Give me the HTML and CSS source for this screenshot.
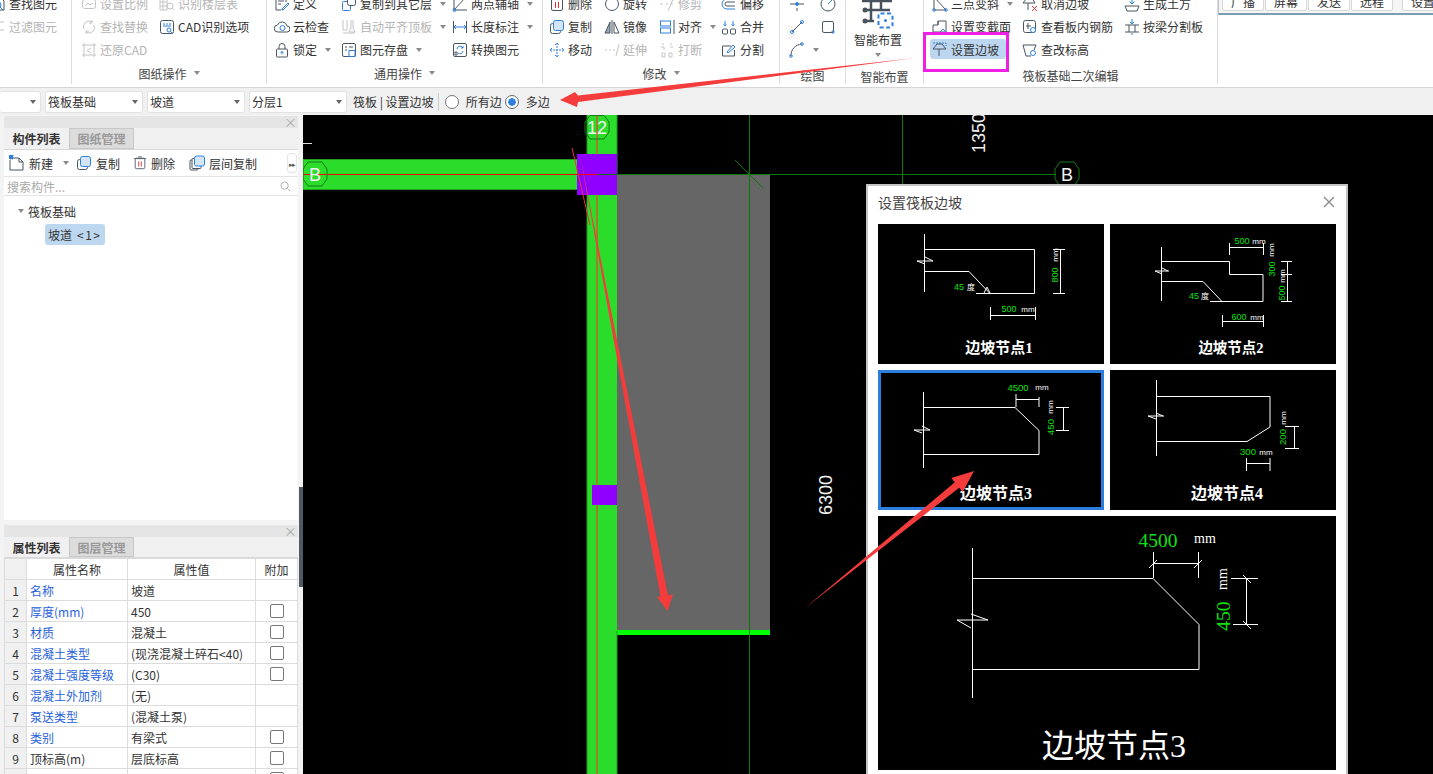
FILE: index.html
```html
<!DOCTYPE html>
<html lang="zh-CN">
<head>
    <meta charset="UTF-8">
    <title>设置筏板边坡</title>
    <link rel="stylesheet" href="styles.css">
</head>
<body>
    <!-- 图标 -->
    <svg class="sprite" xmlns="http://www.w3.org/2000/svg">
        <symbol id="i-find" viewBox="0 0 16 16"><path d="M2 2h9l3 3v9H2z"/><circle class="a" cx="8" cy="9" r="3"/><path class="a" d="M10 11l3 3"/></symbol>
        <symbol id="i-filter" viewBox="0 0 16 16"><path d="M2 3h12M2 7h8M2 11h12M2 14h6"/></symbol>
        <symbol id="i-scale" viewBox="0 0 16 16"><rect x="1.5" y="3.5" width="13" height="9" rx="2"/><path d="M4 10l3-3 2 2 3-2"/></symbol>
        <symbol id="i-replace" viewBox="0 0 16 16"><path d="M3 10a5.500 5.500 0 0 1 8-7M13 6a5.500 5.500 0 0 1-8 7"/><path d="M11 1v3H8M5 15v-3h3"/></symbol>
        <symbol id="i-restore" viewBox="0 0 16 16"><path d="M3 1v14M13 1v14M1 3h14M1 13h14"/><path d="M10 6L6 8.500l4 2.500"/></symbol>
        <symbol id="i-floor" viewBox="0 0 16 16"><path d="M1 2h7v12H1zM1 6h7M1 10h7M4 2v12"/><circle cx="11" cy="10" r="3"/><path d="M13 12l2 2"/></symbol>
        <symbol id="i-cadopt" viewBox="0 0 16 16"><rect x="1.500" y="1.500" width="13" height="13" rx="2"/><path class="a" d="M4 5h2M7 5h2M10 5h2M4 7h8"/><circle class="a" cx="10" cy="11" r="2"/><path class="a" d="M11.500 12.500L14 15"/></symbol>
        <symbol id="i-define" viewBox="0 0 16 16"><path d="M12 6V2H2v12h5"/><path d="M4 5h6M4 8h3"/><path class="a" d="M8 13l6-6 1 1-6 6H8z"/></symbol>
        <symbol id="i-cloud" viewBox="0 0 16 16"><path d="M4 13a3.500 3.500 0 0 1-.500-7A5 5 0 0 1 13 7a3 3 0 0 1 0 6z"/><circle class="a" cx="8.500" cy="9" r="2.500"/></symbol>
        <symbol id="i-lock" viewBox="0 0 16 16"><path d="M5 7V4.500a3 3 0 0 1 6 0V7"/><rect x="2.500" y="7" width="11" height="8" rx="1"/><path class="a" d="M8 9.500v3M6.500 11L8 9.500 9.500 11"/></symbol>
        <symbol id="i-copyto" viewBox="0 0 16 16"><rect class="a" x="1.500" y="5.500" width="8" height="9" rx="1"/><rect x="6.500" y="1.500" width="8" height="8" rx="2" fill="#fff"/></symbol>
        <symbol id="i-aligntop" viewBox="0 0 16 16"><path d="M2 1v10h4V1M2 14h12"/><path d="M10 1v8l-2 4h6l-2-4V1"/></symbol>
        <symbol id="i-save" viewBox="0 0 16 16"><rect x="1.500" y="1.500" width="13" height="13" rx="1.500"/><path d="M4 5h2M8 5h4M4 8h2"/><rect class="a" x="8" y="8.500" width="6" height="6"/></symbol>
        <symbol id="i-axis" viewBox="0 0 16 16"><path d="M2 14L13 2M2 14h13M2 2v12"/><circle class="a" cx="2.500" cy="14" r="1.500"/></symbol>
        <symbol id="i-dim" viewBox="0 0 16 16"><path d="M1.500 2v12M14.500 2v12"/><path class="a" d="M2 8h12M4 6L2 8l2 2M12 6l2 2-2 2"/></symbol>
        <symbol id="i-convert" viewBox="0 0 16 16"><rect x="1.500" y="1.500" width="13" height="13" rx="1.500"/><path class="a" d="M5 7a3 3 0 0 1 5-2l1 1M11 4v2H9M11 9a3 3 0 0 1-5 2"/><path d="M3 10h2v3H3z"/></symbol>
        <symbol id="i-del" viewBox="0 0 16 16"><rect x="2.500" y="2.500" width="11" height="12" rx="1.500"/><path d="M6 1h4M1 3h14"/><path class="r" d="M6.500 6v6M9.500 6v6"/></symbol>
        <symbol id="i-copy" viewBox="0 0 16 16"><rect x="1.500" y="4.500" width="10" height="10" rx="2"/><rect class="a" x="4.500" y="1.500" width="10" height="10" rx="2" fill="#d4e5f8"/></symbol>
        <symbol id="i-move" viewBox="0 0 16 16"><path class="a" d="M8 1v14M1 8h14M6 3l2-2 2 2M6 13l2 2 2-2M3 6L1 8l2 2M13 6l2 2-2 2" stroke-dasharray="2 1"/></symbol>
        <symbol id="i-rotate" viewBox="0 0 16 16"><circle cx="8" cy="8" r="6.500"/></symbol>
        <symbol id="i-mirror" viewBox="0 0 16 16"><path d="M8 1v14"/><path class="g" d="M6 3L1 14h5z"/><path d="M10 3l5 11h-5z"/></symbol>
        <symbol id="i-extend" viewBox="0 0 16 16"><path d="M1 8h2M5 8h2M9 8h2M15 2l-3 12"/></symbol>
        <symbol id="i-trim" viewBox="0 0 16 16"><path d="M1 8h3M7 8h2M15 1L9 15"/><path d="M12 8h3" stroke-dasharray="2 1"/></symbol>
        <symbol id="i-align" viewBox="0 0 16 16"><rect class="a" x="1.500" y="2" width="10" height="5"/><rect class="a" x="1.500" y="9" width="10" height="5"/><path d="M15 1v14"/></symbol>
        <symbol id="i-break" viewBox="0 0 16 16"><path d="M2 5h3v3M11 5h3M3 11h3v4H3zM10 11h3v4h-3z"/><path d="M4 1v2M12 1v2"/></symbol>
        <symbol id="i-offset" viewBox="0 0 16 16"><path class="a" d="M14 3H6a5 5 0 0 0 0 10h8"/><path d="M14 6H6a2 2 0 0 0 0 4h8"/></symbol>
        <symbol id="i-merge" viewBox="0 0 16 16"><rect x="1.500" y="10" width="5" height="5" rx="1"/><rect x="9.500" y="10" width="5" height="5" rx="1"/><path class="a" d="M4 2v5M2.500 5.500L4 7l1.500-1.500M12 2v5M10.500 5.500L12 7l1.500-1.500"/></symbol>
        <symbol id="i-split" viewBox="0 0 16 16"><path d="M10 4H1.500v10h12V8"/><path class="a" d="M6 10l6-7 2 2-7 6z"/></symbol>
        <symbol id="i-point" viewBox="0 0 16 16"><path d="M1 8h5M10 8h5M8 1v3M8 12v3"/><circle class="a" cx="8" cy="8" r="1.500" fill="#2f80dc"/></symbol>
        <symbol id="i-circle" viewBox="0 0 16 16"><circle cx="8" cy="8" r="7"/><path class="a" d="M8 8l4-4"/></symbol>
        <symbol id="i-line" viewBox="0 0 16 16"><path d="M3 13L13 3"/><circle class="a" cx="3" cy="13" r="1.500"/><circle class="a" cx="13" cy="3" r="1.500"/></symbol>
        <symbol id="i-rect" viewBox="0 0 16 16"><rect x="2.500" y="2.500" width="11" height="11" rx="1.500"/><circle class="a" cx="13" cy="13" r="1.200"/></symbol>
        <symbol id="i-arc" viewBox="0 0 16 16"><path d="M2 14C2 7 6 3 13 2"/><circle class="a" cx="2" cy="14" r="1.300"/><circle class="a" cx="13" cy="2" r="1.300"/></symbol>
        <symbol id="i-tri" viewBox="0 0 16 16"><path d="M2 1v13h12z"/><circle class="a" cx="2" cy="14" r="1.300"/><circle class="a" cx="14" cy="14" r="1.300"/></symbol>
        <symbol id="i-section" viewBox="0 0 16 16"><path d="M1 6h5V2h8v11H1z"/><path d="M6 2v4"/><path class="a" d="M8 13l3-3 3 3"/></symbol>
        <symbol id="i-slope" viewBox="0 0 16 16"><path class="a" d="M1 2h13v3" stroke-dasharray="2 1"/><path d="M1 8l4-5h5l4 5zM7 8v7"/></symbol>
        <symbol id="i-cancel" viewBox="0 0 16 16"><path d="M1 7l4-5h5l3 5zM6 7v7"/><path class="r" d="M10 10l5 5M15 10l-5 5"/></symbol>
        <symbol id="i-rebar" viewBox="0 0 16 16"><rect x="1.500" y="1.500" width="12" height="12" rx="2"/><path d="M6 4v6M4 7h5"/><circle class="a" cx="11" cy="11" r="2.500" fill="#fff"/></symbol>
        <symbol id="i-elev" viewBox="0 0 16 16"><path d="M1 3h13L12 8M1 3l3 11h5"/><circle class="a" cx="11" cy="11" r="2.500"/></symbol>
        <symbol id="i-earth" viewBox="0 0 16 16"><path d="M1 10h14l-2 5H3z"/><path class="a" d="M8 1v7M5.500 5.500L8 8l2.500-2.500"/></symbol>
        <symbol id="i-beam" viewBox="0 0 16 16"><path d="M1 6h4v7H1M15 6h-4v7h4M5 6h6M5 13h6"/><path class="a" d="M8 0v5M6 3l2 2 2-2M8 14v2"/></symbol>
        <symbol id="i-new" viewBox="0 0 16 16"><path d="M3 3h7l4 4v8H1V5"/><path d="M10 3v4h4"/><rect class="a" x="0" y="0" width="4" height="4" fill="#2f80dc" stroke-dasharray="1 1"/></symbol>
        <symbol id="i-layer" viewBox="0 0 16 16"><rect x="1" y="5" width="8" height="10" rx="1"/><rect x="3" y="3.500" width="9" height="10" rx="1" fill="#fff"/><rect class="a" x="5.500" y="1" width="10" height="10" rx="2" fill="#d4e5f8"/></symbol>
    </svg>

    <div class="app">
        <header class="ribbon">
            <section class="rb-group g-find">
                <div class="rb-cols">
                    <div class="rb-item"><svg class="ico"><use href="#i-find"/></svg>查找图元</div>
                    <div class="rb-item off"><svg class="ico"><use href="#i-filter"/></svg>过滤图元</div>
                </div>
            </section>
            <section class="rb-group g-draw">
                <div class="rb-cols">
                    <div class="rb-item off"><svg class="ico"><use href="#i-scale"/></svg>设置比例</div>
                    <div class="rb-item off"><svg class="ico"><use href="#i-replace"/></svg>查找替换</div>
                    <div class="rb-item off"><svg class="ico"><use href="#i-restore"/></svg>还原CAD</div>
                    <div class="rb-item off"><svg class="ico"><use href="#i-floor"/></svg>识别楼层表</div>
                    <div class="rb-item"><svg class="ico"><use href="#i-cadopt"/></svg>CAD识别选项</div>
                </div>
                <div class="rb-label">图纸操作<i class="caret"></i></div>
            </section>
            <section class="rb-group g-common">
                <div class="rb-cols">
                    <div class="rb-item"><svg class="ico"><use href="#i-define"/></svg>定义</div>
                    <div class="rb-item"><svg class="ico"><use href="#i-cloud"/></svg>云检查</div>
                    <div class="rb-item"><svg class="ico"><use href="#i-lock"/></svg>锁定<i class="caret"></i></div>
                    <div class="rb-item"><svg class="ico"><use href="#i-copyto"/></svg>复制到其它层<i class="caret"></i></div>
                    <div class="rb-item off"><svg class="ico"><use href="#i-aligntop"/></svg>自动平齐顶板<i class="caret"></i></div>
                    <div class="rb-item"><svg class="ico"><use href="#i-save"/></svg>图元存盘<i class="caret"></i></div>
                    <div class="rb-item"><svg class="ico"><use href="#i-axis"/></svg>两点辅轴<i class="caret"></i></div>
                    <div class="rb-item"><svg class="ico"><use href="#i-dim"/></svg>长度标注<i class="caret"></i></div>
                    <div class="rb-item"><svg class="ico"><use href="#i-convert"/></svg>转换图元</div>
                </div>
                <div class="rb-label">通用操作<i class="caret"></i></div>
            </section>
            <section class="rb-group g-modify">
                <div class="rb-cols">
                    <div class="rb-item"><svg class="ico"><use href="#i-del"/></svg>删除</div>
                    <div class="rb-item"><svg class="ico"><use href="#i-copy"/></svg>复制</div>
                    <div class="rb-item"><svg class="ico"><use href="#i-move"/></svg>移动</div>
                    <div class="rb-item"><svg class="ico"><use href="#i-rotate"/></svg>旋转</div>
                    <div class="rb-item"><svg class="ico"><use href="#i-mirror"/></svg>镜像</div>
                    <div class="rb-item off"><svg class="ico"><use href="#i-extend"/></svg>延伸</div>
                    <div class="rb-item off"><svg class="ico"><use href="#i-trim"/></svg>修剪</div>
                    <div class="rb-item"><svg class="ico"><use href="#i-align"/></svg>对齐<i class="caret"></i></div>
                    <div class="rb-item off"><svg class="ico"><use href="#i-break"/></svg>打断</div>
                    <div class="rb-item"><svg class="ico"><use href="#i-offset"/></svg>偏移</div>
                    <div class="rb-item"><svg class="ico"><use href="#i-merge"/></svg>合并</div>
                    <div class="rb-item"><svg class="ico"><use href="#i-split"/></svg>分割</div>
                </div>
                <div class="rb-label">修改<i class="caret"></i></div>
            </section>
            <section class="rb-group g-sketch">
                <div class="rb-cols">
                    <div class="rb-item"><svg class="ico"><use href="#i-point"/></svg></div>
                    <div class="rb-item"><svg class="ico"><use href="#i-line"/></svg></div>
                    <div class="rb-item"><svg class="ico"><use href="#i-arc"/></svg><i class="caret"></i></div>
                    <div class="rb-item"><svg class="ico"><use href="#i-circle"/></svg></div>
                    <div class="rb-item"><svg class="ico"><use href="#i-rect"/></svg></div>
                </div>
                <div class="rb-label low">绘图</div>
            </section>
            <section class="rb-group g-smart">
                <div class="smart-btn">
                    <svg class="smart-ico" viewBox="0 0 32 36">
                        <path d="M9 0v26M19 0v16M0 6h30M4 15h24M4 26h8" stroke="#47525e" stroke-width="2.500" fill="none"/>
                        <circle cx="3" cy="15" r="2.500" fill="#47525e"/>
                        <circle cx="3" cy="26" r="2.500" fill="#47525e"/>
                        <rect x="16.500" y="18.500" width="14" height="14" rx="2" fill="#fff" stroke="#2f80dc" stroke-width="2" stroke-dasharray="4 2.500"/>
                        <circle cx="23.500" cy="25.500" r="1.500" fill="#2f80dc"/>
                    </svg>
                    <span>智能布置</span>
                    <i class="caret"></i>
                </div>
                <div class="rb-label low">智能布置</div>
            </section>
            <section class="rb-group g-edit">
                <div class="rb-cols">
                    <div class="rb-item"><svg class="ico"><use href="#i-tri"/></svg>三点变斜<i class="caret"></i></div>
                    <div class="rb-item"><svg class="ico"><use href="#i-section"/></svg>设置变截面</div>
                    <div class="rb-item active"><svg class="ico"><use href="#i-slope"/></svg>设置边坡</div>
                    <div class="rb-item"><svg class="ico"><use href="#i-cancel"/></svg>取消边坡</div>
                    <div class="rb-item"><svg class="ico"><use href="#i-rebar"/></svg>查看板内钢筋</div>
                    <div class="rb-item"><svg class="ico"><use href="#i-elev"/></svg>查改标高</div>
                    <div class="rb-item"><svg class="ico"><use href="#i-earth"/></svg>生成土方</div>
                    <div class="rb-item"><svg class="ico"><use href="#i-beam"/></svg>按梁分割板</div>
                </div>
                <div class="rb-label low">筏板基础二次编辑</div>
                <div class="pink-box"></div>
            </section>
            <section class="live-bar">
                <div class="live-btns">
                    <span class="live-btn">广播</span>
                    <span class="live-btn">屏幕</span>
                    <span class="live-btn">发送</span>
                    <span class="live-btn">远程</span>
                    <span class="live-btn last">设置</span>
                </div>
            </section>
        </header>

        <div class="optbar">
            <div class="sel s-first"><i class="caret dark"></i></div>
            <div class="sel">筏板基础<i class="caret dark"></i></div>
            <div class="sel">坡道<i class="caret dark"></i></div>
            <div class="sel">分层1<i class="caret dark"></i></div>
            <span class="opt-title">筏板 | 设置边坡</span>
            <span class="opt-sep"></span>
            <span class="radio"></span><span class="radio-text">所有边</span>
            <span class="radio on"></span><span class="radio-text">多边</span>
        </div>

        <main class="workspace">
            <aside class="side">
                <div class="panel panel-top">
                    <div class="panel-bar">×</div>
                    <div class="tabs">
                        <span class="tab cur">构件列表</span>
                        <span class="tab">图纸管理</span>
                    </div>
                    <div class="tools">
                        <span class="tool t-new"><svg class="ico"><use href="#i-new"/></svg>新建<i class="caret"></i></span>
                        <span class="tool t-copy"><svg class="ico"><use href="#i-copy"/></svg>复制</span>
                        <span class="tool t-del"><svg class="ico"><use href="#i-del"/></svg>删除</span>
                        <span class="tool"><svg class="ico"><use href="#i-layer"/></svg>层间复制</span>
                        <span class="tool-more">▸▸</span>
                    </div>
                    <div class="search">
                        <span>搜索构件...</span>
                        <svg class="search-ico" viewBox="0 0 12 12"><circle cx="5" cy="5" r="4"/><path d="M8 8l3 3"/></svg>
                    </div>
                    <div class="tree">
                        <div class="tree-root"><i class="caret"></i>筏板基础</div>
                        <div class="tree-leaf">坡道<span class="leaf-count">&lt;1&gt;</span></div>
                    </div>
                </div>
                <div class="panel panel-bottom">
                    <div class="panel-bar">×</div>
                    <div class="tabs">
                        <span class="tab cur">属性列表</span>
                        <span class="tab">图层管理</span>
                    </div>
                    <table class="props">
                        <thead>
                            <tr><th class="no"></th><th class="pname">属性名称</th><th class="pval">属性值</th><th class="padd">附加</th></tr>
                        </thead>
                        <tbody>
                            <tr><td class="no">1</td><td class="link">名称</td><td>坡道</td><td></td></tr>
                            <tr><td class="no">2</td><td class="link">厚度(mm)</td><td>450</td><td><i class="check"></i></td></tr>
                            <tr><td class="no">3</td><td class="link">材质</td><td>混凝土</td><td><i class="check"></i></td></tr>
                            <tr><td class="no">4</td><td class="link">混凝土类型</td><td>(现浇混凝土碎石&lt;40)</td><td><i class="check"></i></td></tr>
                            <tr><td class="no">5</td><td class="link">混凝土强度等级</td><td>(C30)</td><td><i class="check"></i></td></tr>
                            <tr><td class="no">6</td><td class="link">混凝土外加剂</td><td>(无)</td><td></td></tr>
                            <tr><td class="no">7</td><td class="link">泵送类型</td><td>(混凝土泵)</td><td></td></tr>
                            <tr><td class="no">8</td><td class="link">类别</td><td>有梁式</td><td><i class="check"></i></td></tr>
                            <tr><td class="no">9</td><td>顶标高(m)</td><td>层底标高</td><td><i class="check"></i></td></tr>
                            <tr><td class="no"></td><td></td><td></td><td><i class="check"></i></td></tr>
                        </tbody>
                    </table>
                </div>
                <div class="side-handle"></div>
            </aside>

            <section class="canvas">
                <svg class="cad" viewBox="303 115 1130 659">
                    <rect x="617" y="175" width="153" height="456" fill="#666"/>
                    <rect x="617" y="630" width="153" height="5" fill="#00ff00"/>
                    <rect x="303" y="159.500" width="275" height="30" fill="#2bdc2b" stroke="#229c22"/>
                    <rect x="587" y="115" width="30" height="659" fill="#2bdc2b"/>
                    <path d="M587 115v659M617 115v60M617 631v143" stroke="#229c22" fill="none"/>
                    <path d="M597 115V774" stroke="#c8602a" stroke-width="1.500" fill="none"/>
                    <rect x="577" y="154" width="40" height="41" fill="#8f00ff"/>
                    <rect x="592" y="485" width="25" height="20" fill="#8f00ff"/>
                    <path d="M597 174.500H1056M749.500 115V774M902.500 115V184M735 160l28 28" stroke="#0b7a0b" fill="none"/>
                    <path d="M303 143.500h9" stroke="#ddd" fill="none"/>
                    <path d="M303 174.500H597" stroke="#f00" fill="none"/>
                    <path d="M572 148l18 77" stroke="#e33" fill="none"/>
                    <polygon points="590,115.500 604,115.500 609,122 609,132 604,139 590,139 585,132 585,122" fill="none" stroke="#157a15"/>
                    <polygon points="308,162 322,162 327,169 327,179 322,186 308,186 303,179 303,169" fill="none" stroke="#157a15"/>
                    <polygon points="1060,162 1074,162 1079,169 1079,179 1074,186 1060,186 1055,179 1055,169" fill="none" stroke="#157a15"/>
                    <text class="cad-t" x="597" y="134" text-anchor="middle" font-size="18">12</text>
                    <text class="cad-t" x="315" y="181" text-anchor="middle" font-size="18">B</text>
                    <text class="cad-t" x="1067" y="181" text-anchor="middle" font-size="18">B</text>
                    <text class="cad-t" text-anchor="middle" font-size="18" transform="translate(985 133) rotate(-90)">1350</text>
                    <text class="cad-t" text-anchor="middle" font-size="18" transform="translate(832 495) rotate(-90)">6300</text>
                </svg>

                <div class="dialog">
                    <div class="dlg-head">
                        <span>设置筏板边坡</span>
                        <svg class="dlg-close" viewBox="0 0 12 12"><path d="M1 1l10 10M11 1L1 11"/></svg>
                    </div>
                    <div class="nodes">
                        <div class="node">
                            <svg viewBox="0 0 226 140">
                                <path class="ln" d="M46.500 10v58M46.500 25.500h110v44H98M46.500 47.500H91l21 22M39 37h16M47 33l8 4M39 37l8 3"/>
                                <path class="ln" d="M182.500 25v44M175 25.500h12M175 69.500h12M112.500 83v13M157.500 83v13M112 91.500h45M106 69l3-6 3 6"/>
                                <text class="gr" x="131" y="88" text-anchor="middle" font-size="9">500</text>
                                <text class="wh" x="150" y="88" text-anchor="middle" font-size="8">mm</text>
                                <text class="gr" text-anchor="middle" font-size="9" transform="translate(180 51) rotate(-90)">800</text>
                                <text class="wh" text-anchor="middle" font-size="8" transform="translate(180 31) rotate(-90)">mm</text>
                                <text class="gr" x="81" y="66" text-anchor="middle" font-size="9">45</text>
                                <text class="wh" x="93" y="66" text-anchor="middle" font-size="8">度</text>
                                <text class="node-title" x="121" y="129" text-anchor="middle" font-size="15">边坡节点1</text>
                            </svg>
                        </div>
                        <div class="node">
                            <svg viewBox="0 0 226 140">
                                <path class="ln" d="M51.500 23v54M51.500 37.500H119.500V50.500H153V77.500H100M51.500 57.500H93l19 20M45 47h14M52 44l6 3M45 47l7 3"/>
                                <path class="ln" d="M119.500 19v12M153.500 19v12M119 23.500h34M177.500 37v40M171 37.500h11M171 50.500h11M171 77.500h11M112.500 91v12M153.500 91v12M112 97.500h41"/>
                                <text class="gr" x="132" y="20" text-anchor="middle" font-size="9">500</text>
                                <text class="wh" x="149" y="20" text-anchor="middle" font-size="8">mm</text>
                                <text class="wh" text-anchor="middle" font-size="8" transform="translate(164 26) rotate(-90)">mm</text>
                                <text class="gr" text-anchor="middle" font-size="9" transform="translate(165 45) rotate(-90)">300</text>
                                <text class="wh" text-anchor="middle" font-size="8" transform="translate(175 52) rotate(-90)">mm</text>
                                <text class="gr" text-anchor="middle" font-size="9" transform="translate(175 69) rotate(-90)">500</text>
                                <text class="gr" x="84" y="75" text-anchor="middle" font-size="9">45</text>
                                <text class="wh" x="95" y="75" text-anchor="middle" font-size="8">度</text>
                                <text class="gr" x="129" y="96" text-anchor="middle" font-size="9">600</text>
                                <text class="wh" x="147" y="96" text-anchor="middle" font-size="8">mm</text>
                                <text class="node-title" x="121" y="129" text-anchor="middle" font-size="14.500">边坡节点2</text>
                            </svg>
                        </div>
                        <div class="node selected">
                            <svg viewBox="0 0 226 140">
                                <path class="ln" d="M45.500 22v76M45 37.500H137L161 60.500V84.500H45M36 60h16M44 56l8 4M36 60l8 3"/>
                                <path class="ln" d="M138 24v13M161 27v10M138 29.500h23M185.500 37v23M178 37.500h13M178 60.500h13"/>
                                <text class="gr" x="140" y="21" text-anchor="middle" font-size="9.500">4500</text>
                                <text class="wh" x="164" y="20" text-anchor="middle" font-size="8">mm</text>
                                <text class="wh" text-anchor="middle" font-size="8" transform="translate(175 37) rotate(-90)">mm</text>
                                <text class="gr" text-anchor="middle" font-size="9.500" transform="translate(176 57) rotate(-90)">450</text>
                                <text class="node-title" x="118" y="129" text-anchor="middle" font-size="16">边坡节点3</text>
                            </svg>
                        </div>
                        <div class="node">
                            <svg viewBox="0 0 226 140">
                                <path class="ln" d="M46.500 10v76M46 26.500H160V57L137 71.500H46M38 46h16M46 43l7 3M38 46l8 3"/>
                                <path class="ln" d="M184.500 56v23M175 56.500h14M175 78.500h14M136.500 88v13M160 88v13M136 93.500h24"/>
                                <text class="wh" text-anchor="middle" font-size="8" transform="translate(176 48) rotate(-90)">mm</text>
                                <text class="gr" text-anchor="middle" font-size="9.500" transform="translate(176 67) rotate(-90)">200</text>
                                <text class="gr" x="138" y="85" text-anchor="middle" font-size="9.500">300</text>
                                <text class="wh" x="156" y="85" text-anchor="middle" font-size="8">mm</text>
                                <text class="node-title" x="117" y="129" text-anchor="middle" font-size="16">边坡节点4</text>
                            </svg>
                        </div>
                        <div class="node preview">
                            <svg viewBox="0 0 458 254">
                                <path class="ln" d="M94.500 32v150M94 62.500H275L321 108.500V153.500H94M93 98l17 6H79l14 8"/>
                                <path class="ln" d="M275.500 36v26M320.500 36v26M275 47.500h45M271 52l8-8M316 52l8-8M368.500 62v46M353 62.500h27M355 108.500h25M365 59l8 8M365 105l8 8"/>
                                <text class="gr serif" x="280" y="31" text-anchor="middle" font-size="19.500">4500</text>
                                <text class="wh serif" x="327" y="27" text-anchor="middle" font-size="14">mm</text>
                                <text class="wh serif" text-anchor="middle" font-size="14" transform="translate(349 63) rotate(-90)">mm</text>
                                <text class="gr serif" text-anchor="middle" font-size="19.500" transform="translate(352 100) rotate(-90)">450</text>
                                <text class="node-title big" x="236" y="241" text-anchor="middle" font-size="32">边坡节点3</text>
                            </svg>
                        </div>
                    </div>
                </div>
            </section>
        </main>

        <!-- 截图上的标注 -->
        <svg class="marks" viewBox="0 0 1433 774">
            <polygon points="560,100 575,92 578,95.500 915,58 578,102 577,107"/>
            <polygon points="579,150 668,595.500 673,594 667.700,611 657,597 660.500,596.500"/>
            <polygon points="805,608 954.800,482.300 951.300,478 974,471 962.700,492 959.200,487.700"/>
        </svg>
    </div>
</body>
</html>
```
FILE: styles.css
```css
* {
    box-sizing: border-box;
}
html, body {
    margin: 0;
    height: 100%;
    overflow: hidden;
}
body {
    font-family: "Noto Sans CJK SC", "Noto Sans", sans-serif;
    font-size: 12px;
    color: #333;
    background-color: #f0f0f0;
}
.sprite {
    display: none;
}
.app {
    position: relative;
    display: flex;
    flex-direction: column;
    width: 1433px;
    height: 774px;
    overflow: hidden;
}

/* 图标 */
.ico {
    flex: none;
    width: 16px;
    height: 16px;
    fill: none;
    stroke: #4a5562;
    stroke-width: 1;
    --ac: #2f80dc;
}
.a { stroke: var(--ac); }
.r { stroke: #e03030; }
.g { fill: #9aa7b5; }
.off .ico {
    stroke: #c4c4c4;
    --ac: #c4c4c4;
}
.caret {
    display: inline-block;
    flex: none;
    width: 0;
    height: 0;
    margin-left: 7px;
    border-style: solid;
    border-width: 4px 3.5px 0;
    border-color: #8a8a8a transparent transparent;
}
.caret.dark {
    border-color: #666 transparent transparent;
}

/* 功能区 */
.ribbon {
    flex: none;
    display: flex;
    height: 88px;
    background-color: #fff;
    border-bottom: 1px solid #d6d6d6;
    overflow: hidden;
}
.rb-group {
    position: relative;
    flex: none;
    height: 84px;
    border-right: 1px solid #dcdcdc;
}
.rb-cols {
    display: grid;
    grid-auto-flow: column;
    grid-template-rows: repeat(3, 23px);
    height: 69px;
    margin-top: -8px;
}
.rb-item {
    display: flex;
    align-items: center;
    gap: 3px;
    height: 23px;
    white-space: nowrap;
}
.rb-item .caret {
    margin-left: 5px;
}
.rb-item.off {
    color: #b4b4b4;
}
.rb-item.active {
    width: 76px;
    height: 20px;
    margin: 1px 0 0 -2px;
    padding-left: 2px;
    background-color: #bdd6f0;
    border-radius: 3px;
}
.rb-label {
    display: flex;
    align-items: center;
    justify-content: center;
    height: 16px;
    margin-top: 4px;
    color: #444;
}
.rb-label.low {
    margin-top: 6px;
}
.g-find { width: 72px; }
.g-find .rb-cols {
    margin-left: -10px;
}
.g-draw { width: 195px; }
.g-draw .rb-cols {
    padding-left: 9px;
    grid-template-columns: 78px 1fr;
}
.g-common { width: 276px; }
.g-common .rb-cols {
    padding-left: 7px;
    grid-template-columns: 67px 111px 1fr;
}
.g-modify { width: 237px; }
.g-modify .rb-cols {
    padding-left: 6px;
    grid-template-columns: 55px 55px 62px 1fr;
}
.g-sketch { width: 66px; }
.g-sketch .rb-cols {
    padding-left: 9px;
    grid-template-columns: 31px 1fr;
}
.g-smart { width: 78px; }
.smart-btn {
    display: flex;
    flex-direction: column;
    align-items: center;
    width: 64px;
    height: 65px;
    margin-top: -5px;
}
.smart-ico {
    width: 32px;
    height: 36px;
}
.smart-btn span {
    line-height: 17px;
}
.smart-btn .caret {
    margin: 5px 0 0;
}
.g-smart .rb-label.low {
    margin-top: 8px;
}
.g-edit { width: 294px; }
.g-edit .rb-cols {
    padding-left: 8px;
    grid-template-columns: 90px 102px 1fr;
}
.pink-box {
    position: absolute;
    left: -1px;
    top: 32px;
    width: 86px;
    height: 40px;
    border: 3px solid #f01fe6;
}
.live-bar {
    flex: 1;
    height: 15px;
    border-left: 1px solid #b8c4cc;
    border-bottom: 2px solid #7c9fb0;
    background-color: #f5f5f5;
    overflow: hidden;
}
.live-btns {
    display: flex;
    gap: 1px;
    margin: -7px 0 0 3px;
}
.live-btn {
    display: block;
    flex: none;
    width: 42px;
    height: 18px;
    line-height: 16px;
    text-align: center;
    white-space: nowrap;
    background-color: #fff;
    border: 1px solid #d8d8d8;
    border-radius: 2px;
}
.live-btn.last {
    margin-left: 8px;
}

/* 选项条 */
.optbar {
    flex: none;
    display: flex;
    align-items: center;
    height: 27px;
    background-color: #f0f0f0;
}
.sel {
    display: flex;
    align-items: center;
    justify-content: space-between;
    width: 98px;
    height: 22px;
    margin-right: 4px;
    padding: 0 4px 0 2px;
    background-color: #fff;
    border: 1px solid #e2e2e2;
    border-radius: 3px;
}
.sel.s-first {
    width: 41px;
    justify-content: flex-end;
    border-left: 0;
}
.opt-title {
    margin-left: 2px;
}
.opt-sep {
    width: 1px;
    height: 18px;
    margin: 0 6px 0 4px;
    background-color: #ccc;
}
.radio {
    flex: none;
    width: 14px;
    height: 14px;
    margin-right: 7px;
    background-color: #fff;
    border: 1px solid #777;
    border-radius: 50%;
}
.radio.on {
    background: radial-gradient(circle, #2f7fdc 0 3.500px, #fff 4px);
    border-color: #5a6a7a;
}
.radio-text {
    margin-right: 3px;
}
.radio-text:last-child {
    margin-right: 0;
}

/* 左侧面板 */
.workspace {
    flex: 1;
    display: flex;
    min-height: 0;
}
.side {
    position: relative;
    flex: none;
    display: flex;
    flex-direction: column;
    gap: 5px;
    width: 303px;
    padding: 1px 5px 0 4px;
    overflow: hidden;
    background-color: #f3f3f3;
}
.panel {
    display: flex;
    flex-direction: column;
    min-height: 0;
    background-color: #fff;
}
.panel-top {
    height: 404px;
    flex: none;
}
.panel-bottom {
    flex: 1;
    overflow: hidden;
}
.panel-bar {
    flex: none;
    height: 12px;
    padding-right: 1px;
    font-size: 13px;
    line-height: 11px;
    text-align: right;
    color: #aaa;
    background-color: #e5e5e5;
}
.tabs {
    flex: none;
    display: flex;
    height: 22px;
    background-color: #f0f0f0;
    border-bottom: 1px solid #d8d8d8;
}
.panel-bottom .tabs {
    height: 21px;
}
.tab {
    width: 65px;
    height: 100%;
    line-height: 19px;
    text-align: center;
    color: #999;
    font-weight: 700;
    background-color: #dcdcdc;
    border: 1px solid #c8c8c8;
}
.tab.cur {
    color: #333;
    background-color: #f0f0f0;
    border-color: transparent;
}
.tools {
    flex: none;
    display: flex;
    align-items: center;
    height: 27px;
    padding-left: 5px;
    border-bottom: 1px solid #e4e4e4;
}
.tool {
    display: flex;
    align-items: center;
    gap: 4px;
    margin-right: 13px;
}
.tool .caret {
    margin-left: 6px;
}
.t-new {
    margin-right: 7px;
}
.t-copy {
    margin-right: 13px;
}
.t-del {
    margin-right: 14px;
}
.t-del .ico {
    width: 14px;
}
.tool-more {
    margin-left: auto;
    margin-right: 1px;
    width: 10px;
    height: 20px;
    font-size: 7px;
    line-height: 20px;
    text-align: center;
    color: #555;
    letter-spacing: -1px;
    border: 1px solid #e4e4e4;
    border-radius: 3px;
}
.search {
    flex: none;
    display: flex;
    align-items: center;
    justify-content: space-between;
    height: 19px;
    padding: 0 7px 0 3px;
    color: #aaa;
    border-bottom: 1px solid #e4e4e4;
}
.search-ico {
    width: 11px;
    height: 11px;
    fill: none;
    stroke: #aaa;
}
.tree {
    flex: 1;
    padding-top: 6px;
}
.tree-root {
    display: flex;
    align-items: center;
    height: 18px;
    padding-left: 14px;
}
.tree-root .caret {
    margin: 0 4px 0 0;
}
.tree-leaf {
    width: 60px;
    height: 21px;
    margin: 4px 0 0 41px;
    padding-left: 3px;
    line-height: 21px;
    white-space: nowrap;
    background-color: #bdd7f0;
    border-radius: 3px;
}
.leaf-count {
    margin-left: 5px;
    letter-spacing: 1.500px;
}
.side-handle {
    position: absolute;
    right: 0;
    top: 372px;
    width: 4px;
    height: 100px;
    background-color: #4d5a66;
}

/* 属性表 */
.props {
    width: 293px;
    table-layout: fixed;
    border-collapse: collapse;
}
.props th, .props td {
    height: 21px;
    padding: 0 3px;
    font-weight: 400;
    white-space: nowrap;
    border: 1px solid #dcdcdc;
}
.props th {
    text-align: center;
}
.props .no {
    width: 22px;
    padding: 0;
    text-align: center;
    background-color: #f0f0f0;
}
.props .pname { width: 101px; }
.props .pval { width: 128px; }
.props .padd { width: 42px; }
.props td:last-child, .props .padd {
    padding: 0;
    text-align: center;
}
.props .link {
    color: #2a62dc;
}
.check {
    display: block;
    width: 14px;
    height: 14px;
    margin: 0 auto;
    border: 1px solid #777;
    border-radius: 2px;
}

/* 绘图区 */
.canvas {
    position: relative;
    flex: 1;
    background-color: #000;
    overflow: hidden;
}
.cad {
    display: block;
    width: 1130px;
    height: 659px;
}
.cad-t {
    fill: #f2f2f2;
    font-family: "Liberation Sans", sans-serif;
}
.dialog {
    position: absolute;
    left: 563px;
    top: 69px;
    width: 482px;
    height: 592px;
    padding: 0 10px;
    background-color: #fff;
    border: 2px solid #c4c4c4;
}
.dlg-head {
    display: flex;
    align-items: center;
    justify-content: space-between;
    height: 38px;
    padding-bottom: 7px;
    font-size: 14px;
    color: #444;
}
.dlg-close {
    width: 12px;
    height: 12px;
    margin-right: 1px;
    fill: none;
    stroke: #888;
    stroke-width: 1.300;
}
.nodes {
    display: grid;
    grid-template-columns: 226px 226px;
    grid-template-rows: 140px 140px 254px;
    gap: 6px;
}
.node {
    position: relative;
    background-color: #000;
}
.node svg {
    display: block;
    width: 100%;
    height: 100%;
}
.node.selected::after {
    content: "";
    position: absolute;
    inset: 0;
    border: 3px solid #2b7de0;
}
.node.preview {
    grid-column: span 2;
}
.ln {
    fill: none;
    stroke: #fff;
}
.gr {
    fill: #10e010;
    font-family: "Liberation Sans", sans-serif;
}
.wh {
    fill: #fff;
    font-family: "Liberation Sans", sans-serif;
}
.gr.serif, .wh.serif {
    font-family: "Liberation Serif", serif;
}
.node-title {
    fill: #fff;
    font-family: "Liberation Serif", "Noto Sans CJK SC", serif;
    font-weight: 700;
}
.node-title.big {
    font-weight: 400;
}

/* 标注箭头 */
.marks {
    position: absolute;
    left: 0;
    top: 0;
    width: 1433px;
    height: 774px;
    fill: #f53c3c;
    pointer-events: none;
}
```
